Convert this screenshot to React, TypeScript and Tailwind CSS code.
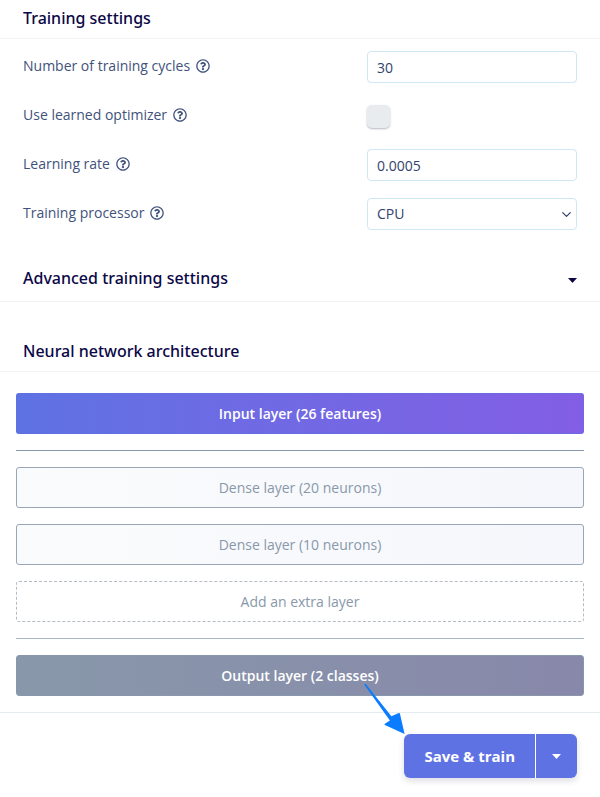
import type { ReactNode } from "react";
import { ChevronDown } from "lucide-react";
import { FaRegQuestionCircle } from "react-icons/fa";

const fieldClass =
  "w-full h-8 rounded border border-[#cfe8f8] bg-white px-[9px] text-[#32436e] outline-none";

const headingClass =
  "border-b border-[#f0f2f4] font-['Noto_Sans','Open_Sans',sans-serif] text-[16px] leading-5 font-medium text-[#0b0747]";

const layers = [
  { title: "Dense layer (20 neurons)" },
  { title: "Dense layer (10 neurons)" },
];

function Caret() {
  return (
    <svg viewBox="0 0 9 5" className="w-[9px] h-[5px] fill-current" aria-hidden="true">
      <path d="M0 0h9L4.9 4.6q-.4.4-.8 0z" />
    </svg>
  );
}

function SettingRow({ id, label, children }: { id: string; label: string; children: ReactNode }) {
  return (
    <div className="flex items-center justify-between h-8">
      <div className="flex items-center gap-1.5 pb-0.5 text-[#41527c]">
        <label htmlFor={id}>{label}</label>
        <FaRegQuestionCircle className="w-[14px] h-[14px]" />
      </div>
      <div className="w-[38%] max-w-[210px] flex items-center">{children}</div>
    </div>
  );
}

export default function App() {
  return (
    <div className="bg-white min-h-screen font-['Open_Sans',sans-serif] text-[14px] leading-5">
      {/* Training settings */}
      <section>
        <h2 className={`${headingClass} px-[23px] pt-2 pb-[10px]`}>Training settings</h2>
        <div className="px-[23px] pt-3 flex flex-col gap-[17px]">
          <SettingRow id="cycles" label="Number of training cycles">
            <input id="cycles" type="text" defaultValue="30" className={fieldClass} />
          </SettingRow>
          <SettingRow id="optimizer" label="Use learned optimizer">
            <input
              id="optimizer"
              type="checkbox"
              className="appearance-none w-[23px] h-[23px] rounded-[5px] bg-[#e8ecef] shadow-[0_1px_2px_rgba(50,50,93,0.35)] checked:bg-[#5e72e4]"
            />
          </SettingRow>
          <SettingRow id="rate" label="Learning rate">
            <input id="rate" type="text" defaultValue="0.0005" className={fieldClass} />
          </SettingRow>
          <SettingRow id="processor" label="Training processor">
            <div className="relative w-full">
              <select id="processor" className={`${fieldClass} appearance-none`}>
                <option>CPU</option>
              </select>
              <ChevronDown className="absolute right-[3px] top-[9px] w-[15px] h-[15px] text-[#32436e] pointer-events-none" strokeWidth={2} />
            </div>
          </SettingRow>
        </div>
      </section>

      {/* Advanced settings, collapsed */}
      <section className="pt-[38px]">
        <h2 className={headingClass}>
          <button type="button" className="w-full flex items-center justify-between px-[23px] pb-[13px]">
            Advanced training settings
            <span className="pt-1">
              <Caret />
            </span>
          </button>
        </h2>
      </section>

      {/* Network architecture */}
      <section className="pt-[31px]">
        <h2 className={`${headingClass} px-[23px] pt-2 pb-[10px]`}>Neural network architecture</h2>
        <div className="px-4 pt-[21px] pb-4 flex flex-col gap-4 text-center">
          <div className="h-[41px] flex items-center justify-center rounded-[3px] border border-[#5e72e4]/60 bg-linear-to-r from-[#5e72e4] to-[#825ee4] bg-origin-border font-semibold text-white">
            Input layer (26 features)
          </div>
          <hr className="border-t border-[#8898aa]" />
          {layers.map((layer) => (
            <button
              key={layer.title}
              type="button"
              className="h-[41px] rounded-[3px] border border-[#98a6b6] bg-linear-to-r from-[#fafbfc] to-[#f6f7fc] text-[#8898aa]"
            >
              {layer.title}
            </button>
          ))}
          <button type="button" className="h-[41px] rounded-[3px] border border-dashed border-[#b4bcc6] text-[#8898aa]">
            Add an extra layer
          </button>
          <hr className="border-t border-[#a9b6c5]" />
          <div className="h-[41px] flex items-center justify-center rounded-[3px] border border-[#8898aa] bg-linear-to-r from-[#8898aa] to-[#8888aa] bg-origin-border font-semibold text-white">
            Output layer (2 classes)
          </div>
        </div>
      </section>

      <footer className="border-t border-[#e3edf0] px-[23px] pt-[21px] pb-4 flex justify-end">
        <div className="relative flex rounded-md shadow-[0_3px_6px_rgba(50,50,93,0.16)] text-[15px] font-bold text-white">
          <button type="button" className="h-11 px-5 rounded-l-md bg-[#5e72e4]">
            Save &amp; train
          </button>
          <button
            type="button"
            aria-label="More save options"
            className="h-11 w-[42px] flex items-center justify-center rounded-r-md border-l border-white bg-[#5e72e4]"
          >
            <Caret />
          </button>
          {/* Pointer to the save button */}
          <svg
            viewBox="0 0 42 52"
            className="absolute -left-10 -top-[51px] w-[42px] h-[52px] fill-[#0a7cff] pointer-events-none"
            aria-hidden="true"
          >
            <path d="M.2 1.6Q.6.4 1.8.9L27.4 33.2 34.8 30q1-.4 1.1.6L40.6 51 20.9 41.9q-1-.6 0-1.2l5-3.2z" />
          </svg>
        </div>
      </footer>
    </div>
  );
}
